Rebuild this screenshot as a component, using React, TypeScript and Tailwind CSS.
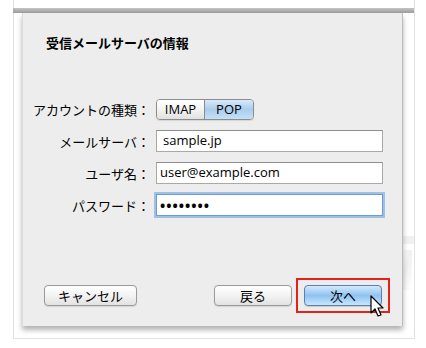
import React from 'react'

const jp = { fontFamily: '"Noto Sans CJK JP", "Noto Sans", sans-serif' }
const latin = { fontFamily: '"Open Sans", "Noto Sans CJK JP", sans-serif' }

function Field({ label, children }: { label: string; children: React.ReactNode }) {
  return (
    <div className="flex items-center h-[22px]">
      <div className="w-[129px] text-right text-[13px] text-black leading-none pr-[2px]" style={jp}>
        {label}
      </div>
      <div className="ml-[4px]">{children}</div>
    </div>
  )
}

function MacButton({ label, width, primary }: { label: string; width: string; primary?: boolean }) {
  return (
    <div
      className={`${width} h-[21px] rounded-[4px] border flex items-center justify-center text-[13px] text-black leading-none ${
        primary
          ? 'border-[#5a7fb5] bg-gradient-to-b from-[#d6e9fb] via-[#8ec3f2] to-[#c8e6fd] shadow-[0_1px_1px_rgba(0,0,0,0.15)]'
          : 'border-[#9a9a9a] bg-gradient-to-b from-[#ffffff] via-[#f3f3f3] to-[#e2e2e2] shadow-[0_1px_1px_rgba(0,0,0,0.1)]'
      }`}
      style={jp}
    >
      {label}
    </div>
  )
}

export default function App() {
  return (
    <div className="w-[426px] h-[348px] bg-white relative overflow-hidden">
      {/* faint window behind */}
      <div className="absolute left-[13px] top-0 w-[402px] h-[339px] border-x border-b border-[#e2e2e2] bg-white">
        <div className="absolute right-0 top-[236px] w-[12px] h-[8px] bg-[#f1f1f1]" />
        <div className="absolute right-[2px] top-[250px] w-[14px] h-[40px] bg-gradient-to-br from-transparent via-[#f0f0f0] to-transparent" />
      </div>

      <div className="relative ml-[13px] w-[401px] pt-[8px]">
        <div className="h-[5px] bg-gradient-to-b from-[#c4c4c4] to-[#9c9c9c]" />
        <div className="ml-[9px] w-[381px] h-[313px] bg-[#ededed] border-l border-[#dcdcdc] border-r border-r-[#bdbdbd] shadow-[0_4px_5px_rgba(0,0,0,0.3)] flex flex-col">
          <div className="pl-[23px] pt-[22px] text-[13px] font-bold text-black leading-[16px]" style={jp}>
            受信メールサーバの情報
          </div>

          <div className="mt-[47px] flex flex-col gap-[10px]">
            <Field label="アカウントの種類：">
              <div className="flex h-[21px] w-[98px] rounded-[4px] border border-[#8c8c8c] overflow-hidden text-[13px] leading-none text-black shadow-[0_1px_1px_rgba(0,0,0,0.1)]" style={latin}>
                <div className="w-[48px] flex items-center justify-center bg-gradient-to-b from-white via-[#f4f4f4] to-[#e0e0e0] border-r border-[#8c8c8c]">
                  IMAP
                </div>
                <div className="flex-1 flex items-center justify-center bg-gradient-to-b from-[#d8e9f8] via-[#a9cdee] to-[#c6e0f6]">
                  POP
                </div>
              </div>
            </Field>
            <Field label="メールサーバ：">
              <div className="w-[227px] h-[22px] bg-white border border-[#a9a9a9] border-t-[#8e8e8e] flex items-center pl-[6px] text-[13px] text-black" style={latin}>
                sample.jp
              </div>
            </Field>
            <Field label="ユーザ名：">
              <div className="w-[227px] h-[22px] bg-white border border-[#a9a9a9] border-t-[#8e8e8e] flex items-center pl-[3px] text-[13px] text-black" style={latin}>
                user@example.com
              </div>
            </Field>
            <Field label="パスワード：">
              <div className="w-[227px] h-[22px] bg-white border border-[#6f9bd0] ring-[2px] ring-[#9dc1e8] flex items-center pl-[3px] text-[14px] font-bold tracking-[1px] text-black" style={latin}>
                ••••••••
              </div>
            </Field>
          </div>

          <div className="mt-auto mb-[20px] flex items-center">
            <div className="ml-[21px]">
              <MacButton label="キャンセル" width="w-[93px]" />
            </div>
            <div className="ml-auto">
              <MacButton label="戻る" width="w-[78px]" />
            </div>
            <div className="relative ml-[12px] mr-[20px]">
              <MacButton label="次へ" width="w-[78px]" primary />
              <div className="absolute -left-[8px] -top-[7px] w-[94px] h-[35px] border-2 border-[#e3221b]" />
              <svg className="absolute left-[66px] top-[10px]" width="16" height="24" viewBox="0 0 16 24">
                <path d="M1 1 L1 18 L5 14 L8 21 L11 20 L8 13 L13 13 Z" fill="#fff" stroke="#000" strokeWidth="1.2" strokeLinejoin="round" />
              </svg>
            </div>
          </div>
        </div>
      </div>
    </div>
  )
}
